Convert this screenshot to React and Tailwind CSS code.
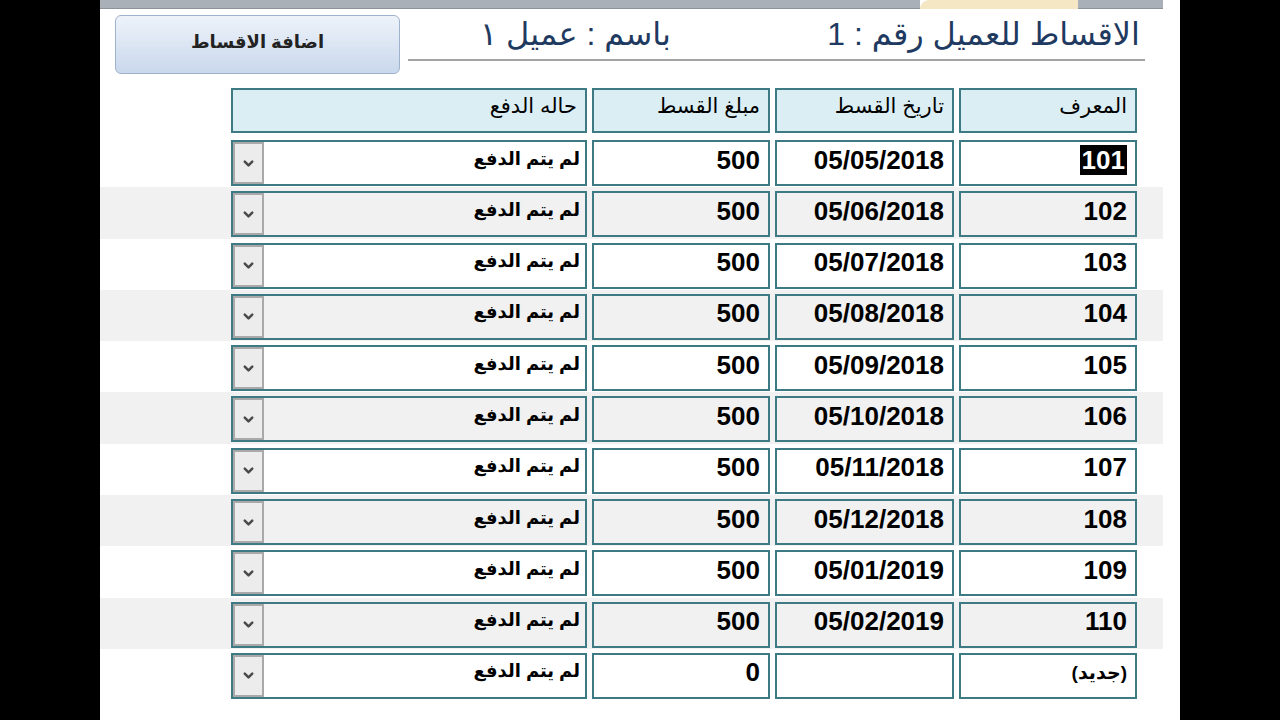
import { ChevronDown } from "lucide-react";

const rows = [
    { id: "101", date: "05/05/2018", amount: "500" },
    { id: "102", date: "05/06/2018", amount: "500" },
    { id: "103", date: "05/07/2018", amount: "500" },
    { id: "104", date: "05/08/2018", amount: "500" },
    { id: "105", date: "05/09/2018", amount: "500" },
    { id: "106", date: "05/10/2018", amount: "500" },
    { id: "107", date: "05/11/2018", amount: "500" },
    { id: "108", date: "05/12/2018", amount: "500" },
    { id: "109", date: "05/01/2019", amount: "500" },
    { id: "110", date: "05/02/2019", amount: "500" },
];

const font = { fontFamily: '"Liberation Sans", "DejaVu Sans", sans-serif' };

function HeaderCell({ w, children }) {
    return (
        <div
            dir="rtl"
            className={`${w} h-[45px] border-2 border-[#3d7a84] bg-[#daeef3] px-[8px] text-[21px] text-black`}
        >
            {children}
        </div>
    );
}

function Cell({ w, children }) {
    return (
        <div
            dir="rtl"
            className={`${w} flex h-[46px] items-center border-2 border-[#3d7a84] pb-[6px] pr-[8px] font-bold text-black`}
        >
            {children}
        </div>
    );
}

function StatusCell() {
    return (
        <div className="flex h-[46px] w-[356px] border-2 border-[#3d7a84]">
            <div className="flex w-[31px] items-center justify-center border-2 border-[#a9a9a9] bg-[#ececec]">
                <ChevronDown size={15} strokeWidth={4} className="text-[#4a4a4a]" />
            </div>
            <div
                dir="rtl"
                className="flex flex-1 items-center pb-[8px] pr-[5px] text-[18px] font-bold text-black"
            >
                لم يتم الدفع
            </div>
        </div>
    );
}

function Row({ id, date, amount, gray, selected }) {
    const isNew = id === "(جديد)";
    return (
        <div className={`flex h-[51.3px] w-[1063px] gap-[5px] pl-[131px] pt-[4px] ${gray ? "bg-[#f1f1f1]" : ""}`}>
            <StatusCell />
            <Cell w="w-[178px] text-[26px]">{amount}</Cell>
            <Cell w="w-[179px] text-[26px]">{date}</Cell>
            <Cell w={`w-[178px] ${isNew ? "text-[19px]" : "text-[26px]"}`}>
                {selected ? <span className="bg-black px-[2px] leading-[30px] text-white">{id}</span> : id}
            </Cell>
        </div>
    );
}

export default function App() {
    return (
        <div className="flex h-[720px] w-[1280px] bg-black" style={font}>
            <div className="ml-[100px] h-full w-[1080px] bg-white">
                <div className="flex h-[9px] w-[1063px]">
                    <div className="w-[820px] border-b border-[#8d939b] bg-[#aab0b8]" />
                    <div className="w-[158px] rounded-tl-[10px] bg-[#f5e6c4]" />
                    <div className="flex-1 border-b border-[#8d939b] bg-[#aab0b8]" />
                </div>

                <div className="flex items-start">
                    <button className="ml-[15px] mt-[6px] flex h-[59px] w-[285px] items-center justify-center rounded-[6px] border border-[#9fb2cc] bg-gradient-to-b from-[#eef3fa] to-[#c9d8ec] pb-[4px] text-[18px] font-bold text-[#222]">
                        اضافة الاقساط
                    </button>
                    <div className="ml-[8px] flex h-[52px] w-[737px] items-center justify-between border-b-2 border-[#a3a3a3] pl-[72px] pr-[5px] text-[32px] text-[#1f3a60]">
                        <span dir="rtl">باسم : عميل ١</span>
                        <span dir="rtl">الاقساط للعميل رقم : 1</span>
                    </div>
                </div>

                <div className="mt-[14px] flex w-[1063px] gap-[5px] pl-[131px]">
                    <HeaderCell w="w-[356px]">حاله الدفع</HeaderCell>
                    <HeaderCell w="w-[178px]">مبلغ القسط</HeaderCell>
                    <HeaderCell w="w-[179px]">تاريخ القسط</HeaderCell>
                    <HeaderCell w="w-[178px]">المعرف</HeaderCell>
                </div>

                <div className="mt-[3px]">
                    {rows.map((r, i) => (
                        <Row key={r.id} {...r} gray={i % 2 === 1} selected={i === 0} />
                    ))}
                    <Row id="(جديد)" date="" amount="0" />
                </div>
            </div>
        </div>
    );
}
